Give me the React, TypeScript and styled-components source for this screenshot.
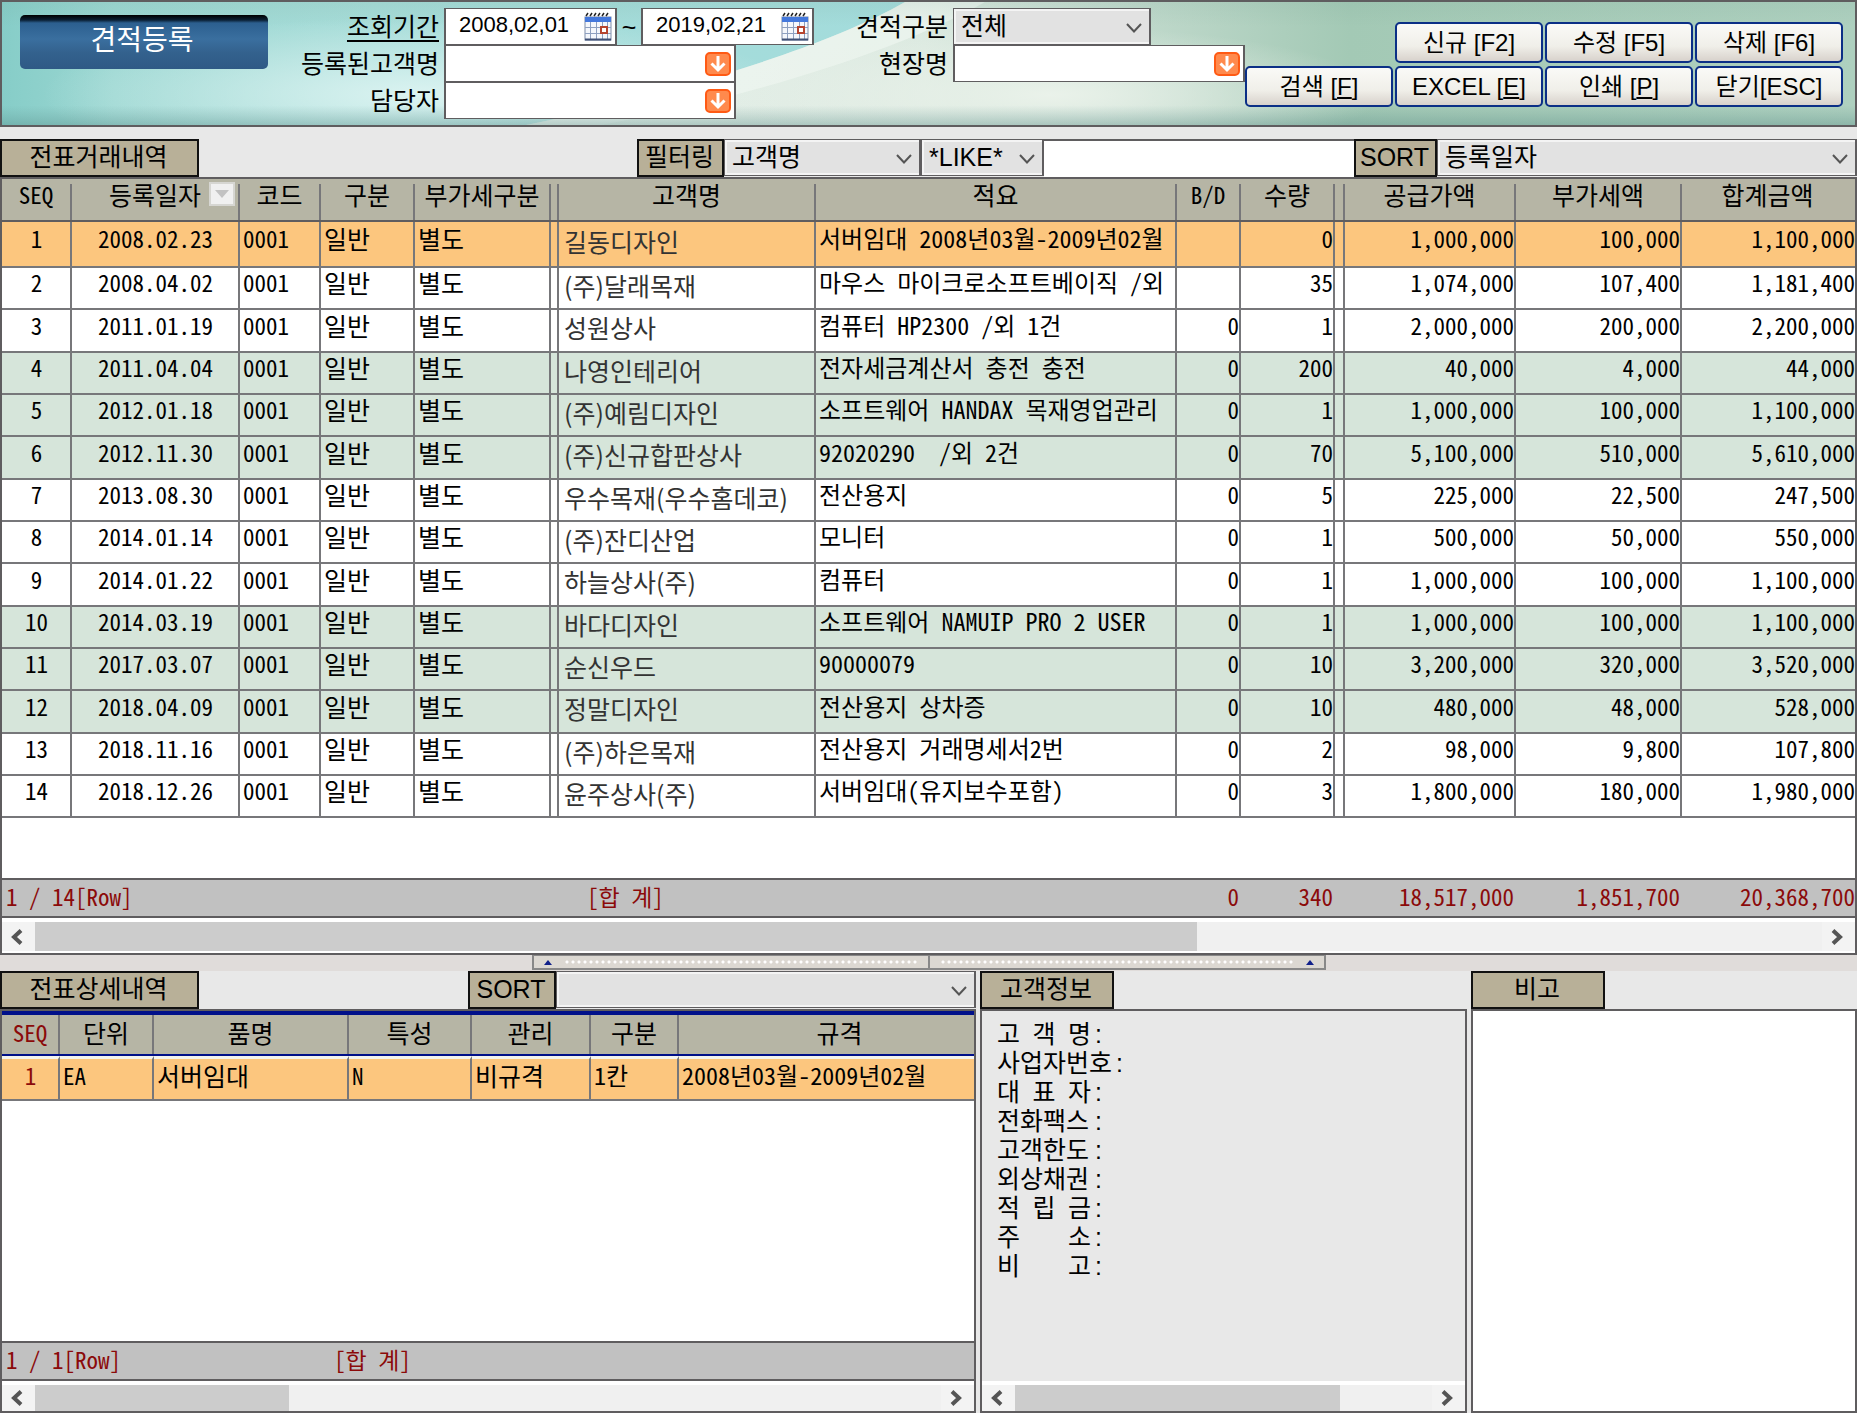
import React from "react";
import styled, { createGlobalStyle, css } from "styled-components";

const UI_FONT = `"Liberation Sans", "Noto Sans CJK KR", sans-serif`;
const GRID_FONT = `"Noto Sans Mono CJK KR", "Noto Sans CJK KR", "Liberation Mono", monospace`;
const NAME_FONT = `"Noto Sans CJK KR", sans-serif`;

const color = {
  line: "#5f5d5f",
  grid: "#77777a",
  page: "#e8e8e8",
  tab: "#b8b098",
  head: "#b6b5a5",
  select: "#e2e2e2",
  picked: "#fcc67e",
  band: "#d6e5da",
  total: "#c1c1c1",
  red: "#8b0a0a",
  navy: "#00108a",
};

const GlobalStyle = createGlobalStyle`
  *, *::before, *::after { box-sizing: border-box; }
  body { margin: 0; background: ${color.page}; }
  button, input, select, textarea { font: inherit; color: inherit; margin: 0; border-radius: 0; }
`;

const Page = styled.div`
  display: flex;
  flex-direction: column;
  min-height: 100vh;
  background: ${color.page};
  color: #000;
  font: 25px/30px ${UI_FONT};
`;

/* ---------- search header ---------- */

const Header = styled.header`
  position: relative;
  display: flex;
  align-items: flex-start;
  height: 127px;
  padding: 6px 12px 0 18px;
  border: 2px solid ${color.line};
  overflow: hidden;
`;

const Backdrop = styled.svg`
  position: absolute;
  inset: 0;
  width: 100%;
  height: 100%;
`;

const Title = styled.h1`
  position: relative;
  width: 248px;
  height: 54px;
  margin: 7px 0 0;
  padding-right: 4px;
  border-radius: 5px;
  background: linear-gradient(#000 0, #0a1f33 5px, #2c5f8f 8px, #3a6f9f 24px, #33618d 38px, #2f5985 100%);
  color: #fff;
  font-size: 28px;
  font-weight: 400;
  line-height: 52px;
  text-align: center;
`;

const SearchForm = styled.form`
  position: relative;
  display: grid;
  grid-template-columns: 176px 370px 139px 292px;
  grid-auto-rows: 37px;
`;

const FieldLabel = styled.label<{ $underlined?: boolean }>`
  padding-right: 5px;
  line-height: 38px;
  text-align: right;
  white-space: nowrap;
  text-decoration: ${(p) => (p.$underlined ? "underline" : "none")};
  text-decoration-thickness: 2px;
  text-underline-offset: 4px;
`;

const DateRange = styled.div`
  display: flex;
  align-items: center;
  justify-content: space-between;
`;

const FieldBox = styled.div<{ $width: string }>`
  display: flex;
  align-items: center;
  width: ${(p) => p.$width};
  height: 37px;
  padding-right: 3px;
  border: 1px solid ${color.line};
  border-left-width: 2px;
  border-right-width: 2px;
  background: #fff;
`;

const FieldInput = styled.input<{ $date?: boolean }>`
  flex: 1;
  min-width: 0;
  height: 100%;
  padding: 0 0 4px;
  border: 0;
  background: transparent;
  outline: 0;
  ${(p) =>
    p.$date &&
    css`
      padding-left: 13px;
      font-size: 22px;
    `}
`;

const IconButton = styled.button`
  display: flex;
  padding: 0;
  border: 0;
  background: transparent;
`;

const SelectBox = styled.div<{ $width?: string }>`
  position: relative;
  display: flex;
  flex: ${(p) => (p.$width ? "none" : 1)};
  width: ${(p) => p.$width ?? "auto"};
  height: 37px;
  border: 1px solid ${color.line};
  border-right-width: 2px;
  background: ${color.select};
`;

const SelectField = styled.select`
  width: 100%;
  padding: 0 32px 4px 5px;
  border: 2px solid #f4f4f4;
  border-right: 0;
  appearance: none;
  background: transparent;
  outline: 0;
`;

const SelectArrow = styled.svg`
  position: absolute;
  top: 12px;
  right: 7px;
  width: 16px;
  height: 14px;
  pointer-events: none;
`;

const Actions = styled.div`
  position: relative;
  display: grid;
  grid-template-columns: repeat(4, 148px);
  grid-auto-rows: 41px;
  gap: 3px 2px;
  margin: 14px 0 0 auto;
`;

const ActionButton = styled.button<{ $first?: boolean }>`
  grid-column: ${(p) => (p.$first ? 2 : "auto")};
  padding: 1px 0 0;
  border: 2px solid #0b2f86;
  border-radius: 5px;
  background: linear-gradient(#fafaf7, #f0efe9 60%, #d8d2cc);
  font-size: 24px;
  line-height: 32px;
  white-space: nowrap;
`;

/* ---------- tab strips ---------- */

const Strip = styled.div`
  display: flex;
  align-items: stretch;
  height: 38px;
`;

const UpperStrip = styled(Strip)`
  margin-top: 12px;
`;

const Tab = styled.h2<{ $width: number; $gap?: boolean }>`
  width: ${(p) => p.$width}px;
  margin: 0 ${(p) => (p.$gap ? "auto" : 0)} 0 0;
  padding-right: 2px;
  border: 2px solid #111;
  background: ${color.tab};
  font-size: 25px;
  font-weight: 400;
  line-height: 32px;
  text-align: center;
  white-space: nowrap;
`;

const FilterTools = styled.div`
  display: flex;
  flex: 0 0 1220px;
  min-width: 0;
  max-width: 66%;
`;

const FilterInput = styled.input`
  flex: 1 1 0;
  width: 0;
  min-width: 0;
  padding: 0 6px;
  border: 1px solid ${color.line};
  border-width: 2px 0 0;
  background: #fff;
  outline: 0;
`;

/* ---------- data grids ---------- */

const GridPanel = styled.section`
  border: solid ${color.line};
  border-width: 2px;
  background: #fff;
`;

const Table = styled.table`
  width: 100%;
  border-collapse: separate;
  border-spacing: 0;
  table-layout: fixed;
  font: 23px/26px ${GRID_FONT};
`;

const HeadCell = styled.th<{ $red?: boolean; $navy?: boolean; $latin?: boolean }>`
  height: ${(p) => (p.$navy ? 45 : 43)}px;
  padding: 0 2px ${(p) => (p.$navy ? 6 : 12)}px 0;
  border-bottom: 2px solid ${(p) => (p.$navy ? color.navy : color.line)};
  background: linear-gradient(${color.grid}, ${color.grid}) right bottom / 2px ${(p) => (p.$navy ? "100%" : "calc(100% - 5px)")} no-repeat, ${color.head};
  color: ${(p) => (p.$red ? color.red : "inherit")};
  font-size: ${(p) => (p.$latin ? 23 : 25)}px;
  font-weight: 400;
  text-align: center;
  white-space: nowrap;
  &:last-child { background: ${color.head}; }
  ${(p) =>
    p.$navy &&
    css`
      border-top: 4px solid ${color.navy};
      &:last-child { padding-left: 28px; }
    `}
`;

const HeadLabel = styled.span`
  display: flex;
  align-items: center;
  justify-content: flex-end;
  gap: 8px;
  padding-right: 3px;
`;

const SortButton = styled.button`
  display: flex;
  align-items: center;
  justify-content: center;
  width: 26px;
  height: 24px;
  padding: 0;
  border: 2px solid #d6d6d2;
  background: #f0f0f0;
`;

const Cell = styled.td<{ $align?: string; $red?: boolean }>`
  padding: 0 ${(p) => (p.$align === "right" ? 0 : 2)}px 12px 3px;
  border-right: 2px solid ${color.grid};
  border-bottom: 2px solid ${color.grid};
  color: ${(p) => (p.$red ? color.red : "inherit")};
  text-align: ${(p) => p.$align ?? "left"};
  white-space: pre;
  &:last-child { border-right: 0; }
`;

const TextCell = styled(Cell)`
  font-size: 24px;
`;

const HangulCell = styled(Cell)`
  font-size: 25px;
`;

const NameCell = styled(Cell)`
  padding: 0 2px 7px 5px;
  color: #333;
  font-family: ${NAME_FONT};
  font-size: 25px;
`;

const Row = styled.tr<{ $tone: string }>`
  height: 42px;
  background: ${(p) => p.$tone};
  &:nth-child(3n) { height: 43px; }
  &:first-child { height: 46px; }
`;

const DetailRow = styled.tr`
  height: 45px;
  > td {
    padding-bottom: 9px;
    border-top: 3px solid #f4f4ee;
    background: ${color.picked} padding-box;
  }
`;

const SpacerCell = styled.td`
  height: 60px;
  padding: 0;
`;

const TotalCell = styled.td<{ $align?: string; $indent?: number }>`
  height: 40px;
  padding: 0 ${(p) => (p.$align === "right" ? 2 : 4)}px 5px ${(p) => p.$indent ?? 4}px;
  border: solid ${color.line};
  border-width: 2px 0;
  background: ${color.total};
  color: ${color.red};
  text-align: ${(p) => p.$align ?? "left"};
  white-space: pre;
  &:last-child { padding-right: 0; }
`;

const Scrollbar = styled.div<{ $height: number }>`
  display: flex;
  align-items: stretch;
  height: ${(p) => p.$height}px;
  padding: 4px 0 ${(p) => (p.$height > 32 ? 2 : 0)}px;
  background: #fff;
`;

const ScrollArrow = styled.button`
  display: flex;
  align-items: center;
  justify-content: center;
  width: 33px;
  padding: 0 3px 0 0;
  border: 0;
  background: #f3f3f3;
`;

const ScrollTrack = styled.div`
  flex: 1;
  background: #f0f0f0;
`;

const ScrollThumb = styled.div`
  height: 100%;
  background: #cccccc;
`;

/* ---------- splitter ---------- */

const Splitter = styled.div`
  display: flex;
  justify-content: center;
  height: 16px;
  background: #e0dcda;
`;

const SplitHandle = styled.div`
  display: flex;
  width: 794px;
  height: 15px;
  border: 2px solid #888;
  border-top: 1px solid #888;
  background: #dcd8d2;
`;

const SplitHalf = styled.div<{ $reverse?: boolean }>`
  display: flex;
  flex: 1;
  flex-direction: ${(p) => (p.$reverse ? "row-reverse" : "row")};
  align-items: center;
  gap: 12px;
  padding: 0 10px;
  border-left: ${(p) => (p.$reverse ? "2px solid #888" : "0")};
`;

const SplitDots = styled.span`
  flex: 1;
  height: 4px;
  background: radial-gradient(circle, #fff 1px, transparent 2px) 0 0 / 6px 4px;
`;

/* ---------- lower area ---------- */

const Lower = styled.main`
  display: grid;
  flex: 1;
  grid-template-columns: minmax(0, 976fr) minmax(0, 487fr) minmax(0, 386fr);
  gap: 4px;
`;

const Column = styled.section`
  display: flex;
  flex-direction: column;
`;

const DetailPanel = styled.div`
  display: flex;
  flex: 1;
  flex-direction: column;
  border: 2px solid ${color.line};
  background: #fff;
`;

const Spring = styled.div`
  flex: 1;
`;

const InfoPanel = styled(DetailPanel)`
  background: ${color.page};
`;

const InfoList = styled.ul`
  flex: 1;
  margin: 0;
  padding: 9px 0 0 15px;
  list-style: none;
  line-height: 29px;
`;

const InfoItem = styled.li`
  display: flex;
  gap: 4px;
`;

const InfoName = styled.span`
  min-width: 94px;
  text-align: justify;
  text-align-last: justify;
`;

const Memo = styled.textarea`
  display: block;
  flex: 1;
  width: 100%;
  padding: 8px;
  border: 2px solid ${color.line};
  background: #fff;
  outline: 0;
  resize: none;
`;

/* ---------- drawings ---------- */

const HeaderArt = () => (
  <Backdrop viewBox="0 0 1857 126" preserveAspectRatio="none" aria-hidden="true">
    <defs>
      <linearGradient id="sky" x1="0" x2="1" y1="0" y2="0">
        <stop offset="0" stopColor="#86cdc8" />
        <stop offset="0.06" stopColor="#9cd7d2" />
        <stop offset="0.2" stopColor="#a6dcd8" />
        <stop offset="0.5" stopColor="#a3dcdc" />
      </linearGradient>
      <linearGradient id="field" x1="0" x2="1" y1="0" y2="0">
        <stop offset="0" stopColor="#e9f2ec" />
        <stop offset="0.3" stopColor="#dbe9e0" />
        <stop offset="0.5" stopColor="#b9d5c6" />
        <stop offset="0.62" stopColor="#a3c9b5" />
        <stop offset="1" stopColor="#aed0bf" />
      </linearGradient>
      <radialGradient id="glow">
        <stop offset="0" stopColor="#dbf3f1" />
        <stop offset="1" stopColor="#dbf3f1" stopOpacity="0" />
      </radialGradient>
      <radialGradient id="mist">
        <stop offset="0" stopColor="#eaf2ea" />
        <stop offset="1" stopColor="#eaf2ea" stopOpacity="0" />
      </radialGradient>
      <linearGradient id="shade" x1="0" x2="0" y1="0" y2="1">
        <stop offset="0" stopColor="#6f9c8c" stopOpacity="0.12" />
        <stop offset="0.2" stopColor="#6f9c8c" stopOpacity="0" />
        <stop offset="0.84" stopColor="#5f9490" stopOpacity="0" />
        <stop offset="1" stopColor="#4f8480" stopOpacity="0.35" />
      </linearGradient>
    </defs>
    <rect width="1857" height="126" fill="url(#sky)" />
    <ellipse cx="420" cy="95" rx="380" ry="80" fill="url(#glow)" />
    <path d="M525 126C650 100 820 50 905 0H1857V126Z" fill="url(#field)" />
    <path d="M525 126C650 100 820 50 905 0H985C900 50 740 100 600 126Z" fill="#f1f8f3" opacity="0.6" />
    <ellipse cx="1050" cy="95" rx="330" ry="70" fill="url(#mist)" />
    <rect width="1857" height="126" fill="url(#shade)" />
  </Backdrop>
);

const CalendarIcon = () => (
  <svg width="28" height="29" viewBox="0 0 28 29" aria-hidden="true">
    <rect x="1" y="5" width="26" height="23" fill="#f4f7fc" stroke="#7d8ba8" />
    <rect x="1" y="5" width="26" height="5" fill="#4478dc" />
    <path d="M2 4l2-3M6 4l2-3M10 4l2-3M14 4l2-3M18 4l2-3M22 4l2-3" stroke="#222" strokeWidth="1.5" />
    <path d="M1 15.500H27M1 21.500H27M6.500 10V28M12.500 10V28M18.500 10V28M23.500 10V28" stroke="#8ea0c0" />
    <rect x="17" y="15" width="6" height="6" fill="#fff" stroke="#b5442f" strokeWidth="2" />
    <path d="M1 27.500H27" stroke="#3f5076" strokeWidth="2" />
  </svg>
);

const DropIcon = () => (
  <svg width="26" height="24" viewBox="0 0 26 24" aria-hidden="true">
    <rect x="1" y="1" width="24" height="22" rx="4" fill="#ff8a4d" stroke="#ff5a14" strokeWidth="2" />
    <path d="M13 4V18M6.500 11.500L13 18L19.500 11.500" fill="none" stroke="#fff" strokeWidth="3" />
  </svg>
);

const Chevron = () => (
  <SelectArrow viewBox="0 0 16 14" aria-hidden="true">
    <path d="M1 3L8 10.500L15 3" fill="none" stroke="#555" strokeWidth="2" />
  </SelectArrow>
);

const ScrollChevron = ({ right }: { right?: boolean }) => (
  <svg width="14" height="16" viewBox="0 0 14 16" aria-hidden="true">
    <path d={right ? "M3 1.500L10 8L3 14.500" : "M11 1.500L4 8L11 14.500"} fill="none" stroke="#555" strokeWidth="4" />
  </svg>
);

const UpTriangle = () => (
  <svg width="8" height="5" viewBox="0 0 8 5" aria-hidden="true">
    <path d="M4 0L8 5H0Z" fill="#10208a" />
  </svg>
);

/* ---------- reusable parts ---------- */

const Picker = ({ label, width, options }: { label: string; width?: string; options: string[] }) => (
  <SelectBox $width={width}>
    <SelectField id={label} aria-label={label}>
      {options.map((o) => (
        <option key={o}>{o}</option>
      ))}
    </SelectField>
    <Chevron />
  </SelectBox>
);

const LookupField = ({ id, width }: { id: string; width: string }) => (
  <FieldBox $width={width}>
    <FieldInput id={id} />
    <IconButton type="button" aria-label="찾기">
      <DropIcon />
    </IconButton>
  </FieldBox>
);

const DateField = ({ id, label, value, width }: { id: string; label: string; value: string; width: string }) => (
  <FieldBox $width={width}>
    <FieldInput id={id} aria-label={label} defaultValue={value} $date />
    <IconButton type="button" aria-label="달력">
      <CalendarIcon />
    </IconButton>
  </FieldBox>
);

const HScroll = ({ thumb, height }: { thumb: number; height: number }) => (
  <Scrollbar $height={height}>
    <ScrollArrow type="button" aria-label="왼쪽">
      <ScrollChevron />
    </ScrollArrow>
    <ScrollTrack>
      <ScrollThumb style={{ width: `${thumb}%` }} />
    </ScrollTrack>
    <ScrollArrow type="button" aria-label="오른쪽">
      <ScrollChevron right />
    </ScrollArrow>
  </Scrollbar>
);

/* ---------- data ---------- */

const slips = [
  ["2008.02.23", "길동디자인", "서버임대 2008년03월-2009년02월", "", "0", "1,000,000", "100,000", "1,100,000"],
  ["2008.04.02", "(주)달래목재", "마우스 마이크로소프트베이직 /외", "", "35", "1,074,000", "107,400", "1,181,400"],
  ["2011.01.19", "성원상사", "컴퓨터 HP2300 /외 1건", "0", "1", "2,000,000", "200,000", "2,200,000"],
  ["2011.04.04", "나영인테리어", "전자세금계산서 충전 충전", "0", "200", "40,000", "4,000", "44,000"],
  ["2012.01.18", "(주)예림디자인", "소프트웨어 HANDAX 목재영업관리", "0", "1", "1,000,000", "100,000", "1,100,000"],
  ["2012.11.30", "(주)신규합판상사", "92020290  /외 2건", "0", "70", "5,100,000", "510,000", "5,610,000"],
  ["2013.08.30", "우수목재(우수홈데코)", "전산용지", "0", "5", "225,000", "22,500", "247,500"],
  ["2014.01.14", "(주)잔디산업", "모니터", "0", "1", "500,000", "50,000", "550,000"],
  ["2014.01.22", "하늘상사(주)", "컴퓨터", "0", "1", "1,000,000", "100,000", "1,100,000"],
  ["2014.03.19", "바다디자인", "소프트웨어 NAMUIP PRO 2 USER", "0", "1", "1,000,000", "100,000", "1,100,000"],
  ["2017.03.07", "순신우드", "90000079", "0", "10", "3,200,000", "320,000", "3,520,000"],
  ["2018.04.09", "정말디자인", "전산용지 상차증", "0", "10", "480,000", "48,000", "528,000"],
  ["2018.11.16", "(주)하은목재", "전산용지 거래명세서2번", "0", "2", "98,000", "9,800", "107,800"],
  ["2018.12.26", "윤주상사(주)", "서버임대(유지보수포함)", "0", "3", "1,800,000", "180,000", "1,980,000"],
];

const slipWidths = [70, 168, 81, 94, 136, 8, 257, 0, 64, 94, 10, 171, 166, 173];
const detailWidths = [58, 94, 195, 123, 119, 88, 0];
const infoLabels = ["고 객 명", "사업자번호", "대 표 자", "전화팩스", "고객한도", "외상채권", "적 립 금", "주 소", "비 고"];

const toneOf = (i: number) => (i === 0 ? color.picked : Math.floor(i / 3) % 2 ? color.band : "#fff");

const Columns = ({ widths }: { widths: number[] }) => (
  <colgroup>
    {widths.map((w, i) => (
      <col key={i} width={w || undefined} />
    ))}
  </colgroup>
);

export default function App() {
  return (
    <Page>
      <GlobalStyle />
      <Header>
        <HeaderArt />
        <Title>견적등록</Title>
        <SearchForm>
          <FieldLabel htmlFor="from" $underlined>조회기간</FieldLabel>
          <DateRange>
            <DateField id="from" label="시작일" value="2008,02,01" width="173px" />
            <span>~</span>
            <DateField id="to" label="종료일" value="2019,02,21" width="173px" />
          </DateRange>
          <FieldLabel htmlFor="견적구분">견적구분</FieldLabel>
          <Picker label="견적구분" width="198px" options={["전체"]} />
          <FieldLabel htmlFor="customer">등록된고객명</FieldLabel>
          <LookupField id="customer" width="292px" />
          <FieldLabel htmlFor="site">현장명</FieldLabel>
          <LookupField id="site" width="292px" />
          <FieldLabel htmlFor="manager">담당자</FieldLabel>
          <LookupField id="manager" width="292px" />
        </SearchForm>
        <Actions>
          <ActionButton $first>신규 [F2]</ActionButton>
          <ActionButton>수정 [F5]</ActionButton>
          <ActionButton>삭제 [F6]</ActionButton>
          <ActionButton>검색 [<u>F</u>]</ActionButton>
          <ActionButton>EXCEL [<u>E</u>]</ActionButton>
          <ActionButton>인쇄 [<u>P</u>]</ActionButton>
          <ActionButton>닫기[ESC]</ActionButton>
        </Actions>
      </Header>

      <UpperStrip>
        <Tab $width={199} $gap>전표거래내역</Tab>
        <FilterTools>
          <Tab $width={87}>필터링</Tab>
          <Picker label="필터 항목" width="197px" options={["고객명"]} />
          <Picker label="필터 조건" width="123px" options={["*LIKE*"]} />
          <FilterInput aria-label="필터 값" />
          <Tab $width={83}>SORT</Tab>
          <Picker label="정렬" width="420px" options={["등록일자"]} />
        </FilterTools>
      </UpperStrip>

      <GridPanel>
        <Table>
          <Columns widths={slipWidths} />
          <thead>
            <tr>
              <HeadCell $latin>SEQ</HeadCell>
              <HeadCell>
                <HeadLabel>
                  등록일자
                  <SortButton aria-label="정렬 방향">
                    <svg width="14" height="8" viewBox="0 0 14 8" aria-hidden="true">
                      <path d="M0 0H14L7 8Z" fill="#c2c2c2" />
                    </svg>
                  </SortButton>
                </HeadLabel>
              </HeadCell>
              <HeadCell>코드</HeadCell>
              <HeadCell>구분</HeadCell>
              <HeadCell>부가세구분</HeadCell>
              <HeadCell />
              <HeadCell>고객명</HeadCell>
              <HeadCell>적요</HeadCell>
              <HeadCell $latin>B/D</HeadCell>
              <HeadCell>수량</HeadCell>
              <HeadCell />
              <HeadCell>공급가액</HeadCell>
              <HeadCell>부가세액</HeadCell>
              <HeadCell>합계금액</HeadCell>
            </tr>
          </thead>
          <tbody>
            {slips.map(([date, name, note, bd, qty, supply, vat, sum], i) => (
              <Row key={i} $tone={toneOf(i)}>
                <Cell $align="center">{i + 1}</Cell>
                <Cell $align="center">{date}</Cell>
                <Cell>0001</Cell>
                <HangulCell>일반</HangulCell>
                <HangulCell>별도</HangulCell>
                <Cell />
                <NameCell>{name}</NameCell>
                <TextCell>{note}</TextCell>
                <Cell $align="right">{bd}</Cell>
                <Cell $align="right">{qty}</Cell>
                <Cell />
                <Cell $align="right">{supply}</Cell>
                <Cell $align="right">{vat}</Cell>
                <Cell $align="right">{sum}</Cell>
              </Row>
            ))}
          </tbody>
          <tfoot>
            <tr>
              <SpacerCell colSpan={14} />
            </tr>
            <tr>
              <TotalCell colSpan={6}>1 / 14[Row]</TotalCell>
              <TotalCell colSpan={2} $indent={28}>[합 계]</TotalCell>
              <TotalCell $align="right">0</TotalCell>
              <TotalCell $align="right">340</TotalCell>
              <TotalCell />
              <TotalCell $align="right">18,517,000</TotalCell>
              <TotalCell $align="right">1,851,700</TotalCell>
              <TotalCell $align="right">20,368,700</TotalCell>
            </tr>
          </tfoot>
        </Table>
        <HScroll thumb={65} height={35} />
      </GridPanel>

      <Splitter>
        <SplitHandle>
          <SplitHalf>
            <UpTriangle />
            <SplitDots />
          </SplitHalf>
          <SplitHalf $reverse>
            <UpTriangle />
            <SplitDots />
          </SplitHalf>
        </SplitHandle>
      </Splitter>

      <Lower>
        <Column>
          <Strip>
            <Tab $width={199} $gap>전표상세내역</Tab>
            <Tab $width={88}>SORT</Tab>
            <Picker label="상세 정렬" width="420px" options={[""]} />
          </Strip>
          <DetailPanel>
            <Table>
              <Columns widths={detailWidths} />
              <thead>
                <tr>
                  <HeadCell $navy $red $latin>SEQ</HeadCell>
                  {["단위", "품명", "특성", "관리", "구분", "규격"].map((h) => (
                    <HeadCell key={h} $navy>{h}</HeadCell>
                  ))}
                </tr>
              </thead>
              <tbody>
                <DetailRow>
                  <Cell $align="center" $red>1</Cell>
                  <Cell>EA</Cell>
                  <HangulCell>서버임대</HangulCell>
                  <Cell>N</Cell>
                  <HangulCell>비규격</HangulCell>
                  <TextCell>1칸</TextCell>
                  <TextCell>2008년03월-2009년02월</TextCell>
                </DetailRow>
              </tbody>
            </Table>
            <Spring />
            <Table>
              <Columns widths={detailWidths} />
              <tbody>
                <tr>
                  <TotalCell colSpan={2}>1 / 1[Row]</TotalCell>
                  <TotalCell colSpan={3} $align="center">[합 계]</TotalCell>
                  <TotalCell colSpan={2} />
                </tr>
              </tbody>
            </Table>
            <HScroll thumb={28} height={30} />
          </DetailPanel>
        </Column>

        <Column>
          <Strip>
            <Tab $width={134}>고객정보</Tab>
          </Strip>
          <InfoPanel>
            <InfoList>
              {infoLabels.map((t) => (
                <InfoItem key={t}>
                  <InfoName>{t}</InfoName>:
                </InfoItem>
              ))}
            </InfoList>
            <HScroll thumb={78} height={30} />
          </InfoPanel>
        </Column>

        <Column>
          <Strip>
            <Tab $width={134}>비고</Tab>
          </Strip>
          <Memo aria-label="비고" />
        </Column>
      </Lower>
    </Page>
  );
}
